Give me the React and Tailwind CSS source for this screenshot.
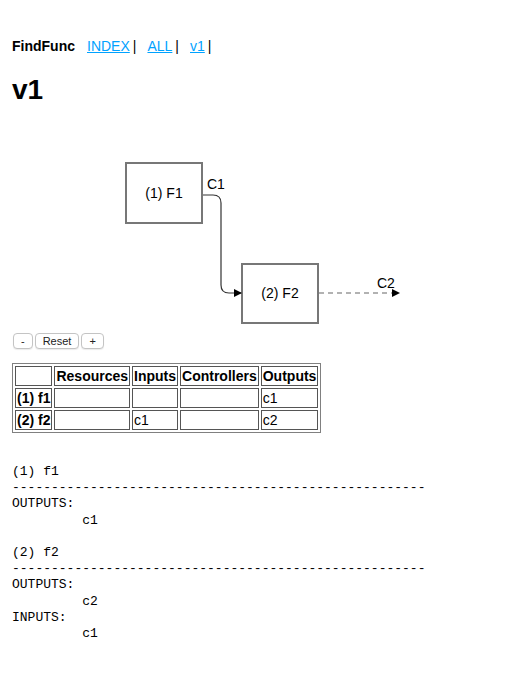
import React from "react";

const dashes = "-".repeat(53);

const btn =
  "h-[16px] px-[7px] text-[11px] leading-none border border-[#c4c4c4] rounded-[4px] bg-white text-[#222] shadow-[0_1px_1px_rgba(0,0,0,0.08)]";
const cell = "border border-[#555] px-[1px] py-[1px]";

export default function App() {
  return (
    <div className="bg-white min-h-[696px] px-3 pt-[38px] text-black" style={{ fontFamily: '"Liberation Sans", Arial, sans-serif' }}>
      <div className="text-[14px] leading-4 flex items-center">
        <span className="font-bold">FindFunc</span>
        <span className="ml-[12px] text-[#00a2ff] underline">INDEX</span>
        <span className="ml-[3px]">|</span>
        <span className="ml-[11px] text-[#00a2ff] underline">ALL</span>
        <span className="ml-[3px]">|</span>
        <span className="ml-[11px] text-[#00a2ff] underline">v1</span>
        <span className="ml-[3px]">|</span>
      </div>
      <h1 className="text-[28px] font-bold leading-8 mt-[20px]">v1</h1>
      <svg width="420" height="227" className="block" viewBox="0 0 420 227">
        <defs>
          <marker id="arr" markerWidth="8" markerHeight="8" refX="7" refY="4" orient="auto" markerUnits="userSpaceOnUse">
            <path d="M0,0 L8,4 L0,8 z" fill="#000" />
          </marker>
        </defs>
        <rect x="114" y="57" width="76" height="60" fill="white" stroke="#777" strokeWidth="2" />
        <text x="152" y="92" fontSize="14" textAnchor="middle" fontFamily="Liberation Sans, Arial, sans-serif">(1) F1</text>
        <rect x="230" y="158" width="76" height="59" fill="white" stroke="#777" strokeWidth="2" />
        <text x="268" y="192" fontSize="14" textAnchor="middle" fontFamily="Liberation Sans, Arial, sans-serif">(2) F2</text>
        <path d="M191,89 L201,89 Q209,89 209,97 L209,179 Q209,187 217,187 L229,187" fill="none" stroke="#333" strokeWidth="1.2" markerEnd="url(#arr)" />
        <text x="195" y="83" fontSize="14" fontFamily="Liberation Sans, Arial, sans-serif">C1</text>
        <path d="M307,187 L387,187" fill="none" stroke="#666" strokeWidth="1.2" strokeDasharray="5,4" markerEnd="url(#arr)" />
        <text x="365" y="182" fontSize="14" fontFamily="Liberation Sans, Arial, sans-serif">C2</text>
      </svg>
      <div className="flex items-center gap-[2px] ml-[1px]">
        <button className={btn}>-</button>
        <button className={btn}>Reset</button>
        <button className={btn}>+</button>
      </div>
      <table className="mt-[14px] border border-[#808080] border-separate border-spacing-[2px] text-[14px] leading-[16px]">
        <tbody>
          <tr className="font-bold">
            <td className={cell}></td>
            <td className={cell}>Resources</td>
            <td className={cell}>Inputs</td>
            <td className={cell}>Controllers</td>
            <td className={cell}>Outputs</td>
          </tr>
          <tr>
            <td className={cell + " font-bold"}>(1) f1</td>
            <td className={cell}></td>
            <td className={cell}></td>
            <td className={cell}></td>
            <td className={cell}>c1</td>
          </tr>
          <tr>
            <td className={cell + " font-bold"}>(2) f2</td>
            <td className={cell}></td>
            <td className={cell}>c1</td>
            <td className={cell}></td>
            <td className={cell}>c2</td>
          </tr>
        </tbody>
      </table>
      <pre className="mt-[31px] text-[13px] leading-[16.2px] [tab-size:8]" style={{ fontFamily: '"Liberation Mono", "Courier New", monospace' }}>
{`(1) f1
${dashes}
OUTPUTS:
\t c1

(2) f2
${dashes}
OUTPUTS:
\t c2
INPUTS:
\t c1`}
      </pre>
    </div>
  );
}
